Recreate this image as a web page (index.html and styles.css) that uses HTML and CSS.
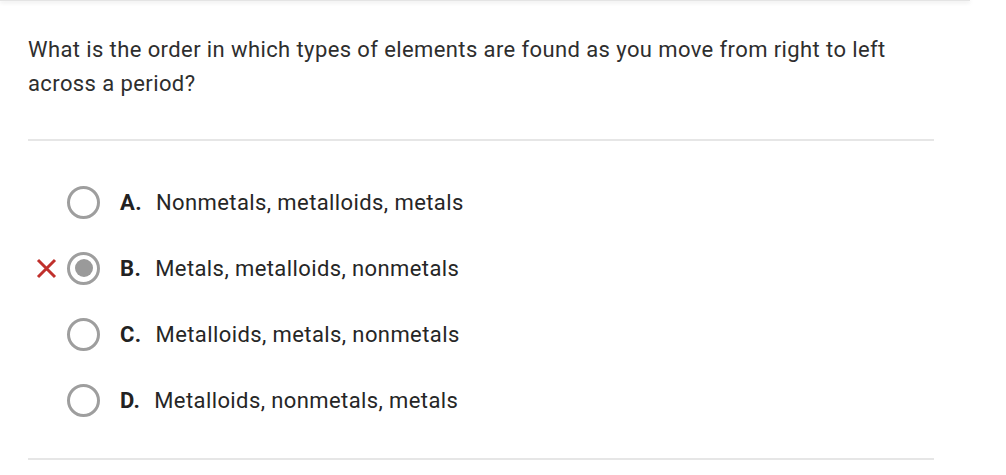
FILE: index.html
```html
<!DOCTYPE html>
<html>
<head>
<meta charset="utf-8">
<link rel="stylesheet" href="styles.css">
</head>
<body>
<div class="topbar"></div>
<main class="card">
  <p class="question">What is the order in which types of elements are found as you move from right to left across a period?</p>
  <hr class="divider">
  <ul class="options">
    <li class="option">
      <span class="mark"></span>
      <span class="radio"></span>
      <span class="letter">A.</span>
      <span class="text">Nonmetals, metalloids, metals</span>
    </li>
    <li class="option">
      <span class="mark">
        <svg width="21" height="21" viewBox="0 0 21 21"><path d="M2 2 L19 19 M19 2 L2 19" stroke="#c0302c" stroke-width="3" fill="none"/></svg>
      </span>
      <span class="radio selected"></span>
      <span class="letter">B.</span>
      <span class="text">Metals, metalloids, nonmetals</span>
    </li>
    <li class="option">
      <span class="mark"></span>
      <span class="radio"></span>
      <span class="letter">C.</span>
      <span class="text">Metalloids, metals, nonmetals</span>
    </li>
    <li class="option">
      <span class="mark"></span>
      <span class="radio"></span>
      <span class="letter">D.</span>
      <span class="text">Metalloids, nonmetals, metals</span>
    </li>
  </ul>
  <hr class="divider bottom">
</main>
</body>
</html>
```
FILE: styles.css
```css
html, body {
  margin: 0;
  padding: 0;
  background: #ffffff;
}
body {
  font-family: Roboto, "Liberation Sans", sans-serif;
  color: #222222;
  width: 1006px;
  height: 475px;
  overflow: hidden;
}
.topbar {
  width: 970px;
  height: 1px;
  background: #e4e4e4;
  box-shadow: 0 1px 4px rgba(0, 0, 0, 0.22);
}
.card {
  width: 906px;
  padding: 32px 0 0 28px;
}
.question {
  margin: 0;
  font-size: 22px;
  letter-spacing: 0.4px;
  line-height: 34px;
  color: #2e2e2e;
}
.divider {
  margin: 38px 0 0 0;
  border: 0;
  height: 2px;
  background: #e6e6e6;
}
.divider.bottom {
  margin-top: 25px;
}
.options {
  list-style: none;
  margin: 28px 0 0 0;
  padding: 0;
}
.option {
  height: 66px;
  display: flex;
  align-items: center;
  font-size: 22px;
  letter-spacing: 0.4px;
  color: #222222;
}
.mark {
  width: 21px;
  height: 21px;
  margin-left: 8px;
  margin-right: 10px;
  display: flex;
}
.radio {
  width: 27px;
  height: 27px;
  border: 3px solid #9e9e9e;
  border-radius: 50%;
  display: flex;
  align-items: center;
  justify-content: center;
  box-sizing: content-box;
}
.radio.selected::after {
  content: "";
  width: 18px;
  height: 18px;
  border-radius: 50%;
  background: #9a9a9a;
}
.letter {
  font-weight: 700;
  margin-left: 20px;
  margin-right: 14px;
  color: #222222;
}
.text {
  color: #262626;
}
```
